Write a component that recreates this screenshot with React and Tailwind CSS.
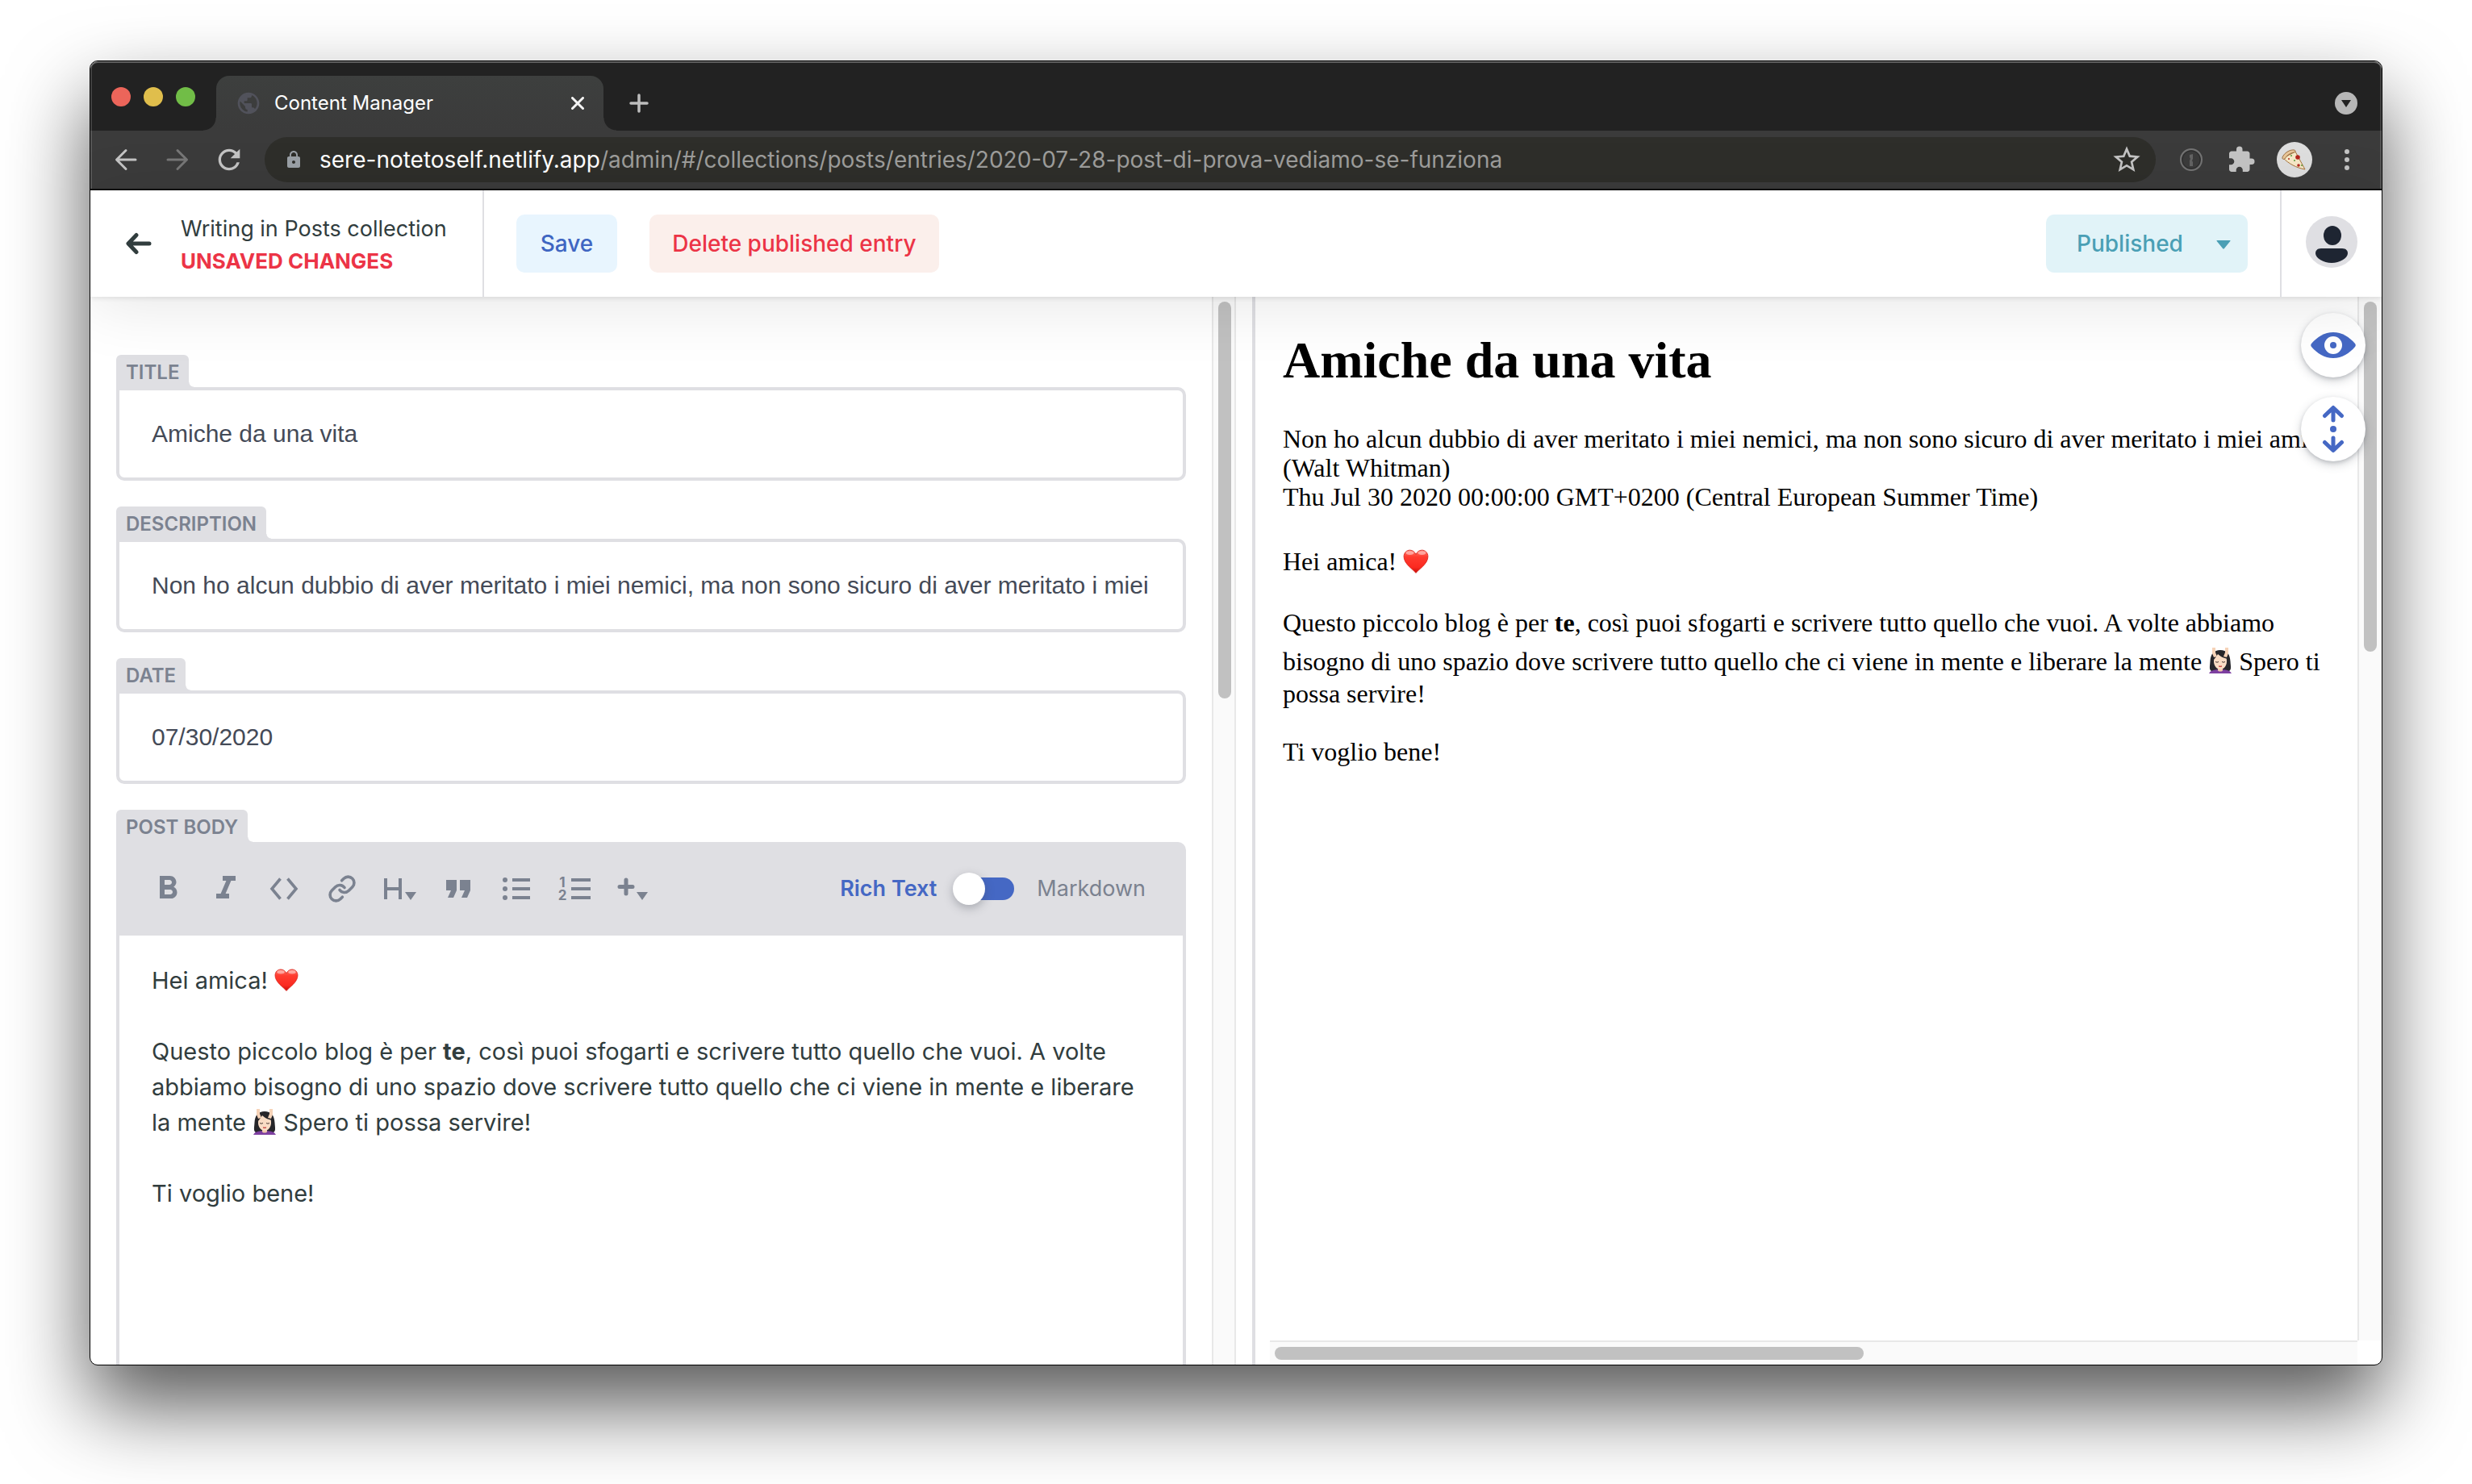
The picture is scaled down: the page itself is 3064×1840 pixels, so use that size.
import React, { useState } from "react";
import {
  MdExtension,
  MdFormatBold,
  MdFormatItalic,
  MdLock,
  MdPublic,
  MdRefresh,
  MdStarBorder,
} from "react-icons/md";
import { Link as LinkIcon } from "lucide-react";

function Heart({ className }) {
  return (
    <svg viewBox="0 0 30 30" role="img" aria-label="❤️" className={className}>
      <defs>
        <linearGradient id="heartFill" x1="0" y1="0" x2="0" y2="1">
          <stop offset="0" stopColor="#ff7466" />
          <stop offset="0.3" stopColor="#ff3b2f" />
          <stop offset="0.75" stopColor="#fb2a20" />
          <stop offset="1" stopColor="#c40d0a" />
        </linearGradient>
      </defs>
      <path
        d="M15 28.500C12 24.500 1 18 1 9.500C1 4.800 4.300 2 8 2C11.200 2 13.800 4 15 7C16.200 4 18.800 2 22 2C25.700 2 29 4.800 29 9.500C29 18 18 24.500 15 28.500Z"
        fill="url(#heartFill)"
        stroke="#d8251c"
        strokeWidth="0.8"
      />
      <ellipse cx="8" cy="5.200" rx="4.600" ry="2.200" fill="#fff" opacity="0.45" />
      <ellipse cx="22" cy="5.200" rx="4.600" ry="2.200" fill="#fff" opacity="0.45" />
    </svg>
  );
}

function Massage({ className }) {
  return (
    <svg viewBox="0 0 30 32" role="img" aria-label="💆🏻‍♀️" className={className}>
      <path d="M15 3C7 3 3 8 2.500 17C2 24 1 27 4 29L26 29C29 27 28 24 27.500 17C27 8 23 3 15 3Z" fill="#26262a" />
      <path d="M1 32C3 28 8 27.500 12 27L18 27C22 27.500 27 28 29 32Z" fill="#7d3fa0" />
      <path d="M12 24h6v4c0 2-6 2-6 0z" fill="#efc9ab" />
      <path d="M15 7C9 7 7 11 7 17C7 23 11 27 15 27C19 27 23 23 23 17C23 11 21 7 15 7Z" fill="#f9dcc4" />
      <path d="M6 16C8 14 10 11 12 8C16 12 21 13 24 14C24 8 20 5 15 5C9 5 6 9 6 16Z" fill="#26262a" />
      <path d="M5 0h4v6l2 5-4 1-2-5zM25 0h-4v6l-2 5 4 1 2-5z" fill="#f6d3b8" />
      <path d="M9 17.500q2 1.500 4 0M17 17.500q2 1.500 4 0" stroke="#4a3a35" strokeWidth="1" fill="none" />
      <path d="M13 23q2 1.500 4 0z" fill="#c8443f" stroke="#c8443f" strokeWidth="0.8" />
    </svg>
  );
}

function Pizza() {
  return (
    <svg viewBox="0 0 44 44" className="size-11" aria-hidden="true">
      <circle cx="22" cy="22" r="22" fill="#dedede" />
      <path d="M8 20L23 12L35 34C24 32 15 27 8 20Z" fill="#f7e9c8" stroke="#a8743c" strokeWidth="1" strokeLinejoin="round" />
      <path d="M7 19C9 14 16 9 22 10C24 11 23 13 21 13C16 14 12 17 10 21C8 22 6.500 21 7 19Z" fill="#e9c79a" stroke="#8a5a2c" strokeWidth="0.8" />
      <circle cx="26" cy="19" r="2.800" fill="#b5271f" />
      <circle cx="27" cy="29" r="1.800" fill="#b5271f" />
      <circle cx="15" cy="21" r="1" fill="#b5271f" />
      <circle cx="18" cy="17" r="1" fill="#5d9a3c" />
      <circle cx="22" cy="23" r="1" fill="#5d9a3c" />
      <circle cx="31" cy="29" r="1" fill="#5d9a3c" />
    </svg>
  );
}

function BrowserChrome() {
  return (
    <div className="relative shrink-0 border-b-2 border-[#121212] bg-[#222222] text-[#c4c4c4]">
      <div className="flex h-[86px] items-end">
        <div className="flex h-[86px] w-[156px] items-center gap-4 pt-0.5 pl-[26px]">
          <button aria-label="Close window" className="size-6 rounded-full bg-[#ec655a]" />
          <button aria-label="Minimize window" className="size-6 rounded-full bg-[#e0be4c]" />
          <button aria-label="Zoom window" className="size-6 rounded-full bg-[#71bd47]" />
        </div>
        <div className="relative flex h-[68px] w-[480px] items-center rounded-t-2xl bg-linear-to-b from-[#3d3f3e] to-[#3b3b3b] pr-5 pl-6">
          <span className="absolute bottom-0 -left-4 size-4 bg-[radial-gradient(circle_at_top_left,transparent_15px,#3b3b3b_16px)]" />
          <span className="absolute -right-4 bottom-0 size-4 bg-[radial-gradient(circle_at_top_right,transparent_15px,#3b3b3b_16px)]" />
          <MdPublic className="size-8 text-[#51525b]" />
          <span className="ml-4 flex-1 text-2xl text-white">Content Manager</span>
          <button aria-label="Close tab" className="p-1">
            <svg viewBox="0 0 16 16" className="size-4" stroke="#f4f4f4" strokeWidth="3" strokeLinecap="round">
              <path d="M1.500 1.500L14.500 14.500M14.500 1.500L1.500 14.500" />
            </svg>
          </button>
        </div>
        <button aria-label="New tab" className="ml-8 flex h-[68px] items-center">
          <svg viewBox="0 0 24 24" className="size-6" stroke="#bdbdbd" strokeWidth="3.500" strokeLinecap="round">
            <path d="M12 2V22M2 12H22" />
          </svg>
        </button>
        <button aria-label="Search tabs" className="mr-[30px] ml-auto flex h-[68px] items-center">
          <svg viewBox="0 0 28 28" className="size-7">
            <circle cx="14" cy="14" r="14" fill="#b7b7b7" />
            <path d="M8 10H20L14 19Z" fill="#222222" />
          </svg>
        </button>
      </div>
      <div className="flex h-[72px] items-center bg-[#3b3b3b]">
        <button aria-label="Back" className="ml-6">
          <svg viewBox="0 0 40 40" className="size-10" fill="none" stroke="#c4c4c4" strokeWidth="3" strokeLinecap="round" strokeLinejoin="round">
            <path d="M32 20H9M20 8.500L8.500 20L20 31.500" />
          </svg>
        </button>
        <button aria-label="Forward" className="ml-6">
          <svg viewBox="0 0 40 40" className="size-10" fill="none" stroke="#777777" strokeWidth="3" strokeLinecap="round" strokeLinejoin="round">
            <path d="M8 20H31M20 8.500L31.500 20L20 31.500" />
          </svg>
        </button>
        <button aria-label="Reload" className="ml-6">
          <MdRefresh className="size-10" />
        </button>
        <div className="ml-6 flex h-14 flex-1 items-center rounded-full bg-[#2e2e2a] pr-4 pl-6">
          <MdLock className="size-6 text-[#9aa0a6]" />
          <div role="textbox" aria-label="Address" className="ml-5 flex-1 text-[28px] whitespace-nowrap text-[#9d9d9b]">
            <span className="text-white">sere-notetoself.netlify.app</span>
            /admin/#/collections/posts/entries/2020-07-28-post-di-prova-vediamo-se-funziona
          </div>
          <button aria-label="Bookmark this page">
            <MdStarBorder className="size-10" />
          </button>
        </div>
        <div className="mr-8 ml-[30px] flex items-center gap-[22px]">
          <button aria-label="1Password" className="mr-1">
            <svg viewBox="0 0 28 28" className="size-7" fill="none" stroke="#747474">
              <circle cx="14" cy="14" r="13" strokeWidth="2" />
              <circle cx="14" cy="14" r="11" stroke="#2c2c2c" />
              <path d="M12 8L16 7V13L15 15L16 17V22H12V15L13 13L12 11Z" fill="#636363" stroke="none" />
            </svg>
          </button>
          <button aria-label="Extensions" className="mx-1">
            <MdExtension className="size-9" />
          </button>
          <button aria-label="Profile">
            <Pizza />
          </button>
          <button aria-label="Browser menu" className="flex w-8 flex-col items-center gap-1 pl-2.5">
            <span className="size-1.5 rounded-full bg-[#c4c4c4]" />
            <span className="size-1.5 rounded-full bg-[#c4c4c4]" />
            <span className="size-1.5 rounded-full bg-[#c4c4c4]" />
          </button>
        </div>
      </div>
      <div className="pointer-events-none absolute inset-0 rounded-t-[9px] shadow-[inset_0_2px_0_rgba(255,255,255,0.28),inset_2px_0_0_rgba(255,255,255,0.14),inset_-2px_0_0_rgba(255,255,255,0.14)]" />
    </div>
  );
}

function EntryHeader() {
  return (
    <header className="relative z-10 flex h-[132px] shrink-0 bg-white text-[28px] shadow-[0_2px_6px_rgba(0,0,0,0.09),0_10px_80px_rgba(0,0,0,0.1)]">
      <a href="#/collections/posts" className="flex items-center border-r-2 border-[#dfdfe3] pr-11 pl-11">
        <svg viewBox="0 0 32 32" className="size-8" fill="none" stroke="#313d3e" strokeWidth="5" strokeLinecap="round" strokeLinejoin="round">
          <path d="M29 16H4M13 5.500L3 16L13 26.500" />
        </svg>
        <span className="ml-9 flex flex-col pt-1 text-[#313d3e]">
          <span className="text-[27px] leading-10">Writing in Posts collection</span>
          <span className="text-[26px] leading-10 font-bold text-[#ec3446]">UNSAVED CHANGES</span>
        </span>
      </a>
      <div className="flex flex-1 items-center gap-10 px-10 font-medium">
        <button className="h-[72px] rounded-[10px] bg-[#e8f5fe] px-[30px] text-[#3f66c2]">Save</button>
        <button className="h-[72px] rounded-[10px] bg-[#fbefeb] px-7 text-[#ec3446]">Delete published entry</button>
        <div className="relative ml-auto">
          <select aria-label="Publish status" className="h-[72px] w-[250px] appearance-none rounded-[10px] bg-[#e1f3f8] pl-[38px] text-[#4a9fb5]">
            <option>Published</option>
          </select>
          <svg viewBox="0 0 18 11" className="pointer-events-none absolute top-8 right-[21px] h-[11px] w-[18px]" fill="#4a9fb5">
            <path d="M1 0H17Q18 0 17.300 1L9.800 10.300Q9 11 8.200 10.300L0.700 1Q0 0 1 0Z" />
          </svg>
        </div>
      </div>
      <div className="flex w-[126px] items-center border-l-2 border-[#dfdfe3] pb-1 pl-[30px]">
        <button aria-label="Account">
          <svg viewBox="0 0 64 64" className="size-16">
            <circle cx="32" cy="32" r="32" fill="#dfdfe3" />
            <ellipse cx="33" cy="24" rx="11" ry="12" fill="#1e2532" />
            <path d="M19 40H45C50 40 52 43 52 46C52 52 42 58 32 58C22 58 12 52 12 46C12 43 14 40 19 40Z" fill="#1e2532" />
          </svg>
        </button>
      </div>
    </header>
  );
}

function FieldLabel({ id, htmlFor, children }) {
  return (
    <label id={id} htmlFor={htmlFor} className="relative inline-block h-10 self-start rounded-t-md bg-[#dfdfe3] px-3 text-2xl leading-[44px] font-semibold text-[#7b8290]">
      {children}
      <span className="absolute -right-1.5 bottom-0 size-1.5 bg-[radial-gradient(circle_at_top_right,transparent_5px,#dfdfe3_6px)]" />
    </label>
  );
}

function TextField({ id, label, value }) {
  return (
    <div className="flex flex-col">
      <FieldLabel htmlFor={id}>{label}</FieldLabel>
      <input
        id={id}
        type="text"
        defaultValue={value}
        className="h-[116px] w-full rounded-[10px] rounded-tl-none border-4 border-[#dfdfe3] bg-white px-10 font-['Liberation_Sans',sans-serif] text-[30px] text-[#444a57] outline-none"
      />
    </div>
  );
}

function Caret() {
  return (
    <svg viewBox="0 0 14 10" className="h-2.5 w-3.5" fill="currentColor">
      <path d="M0 0H14L7 10Z" />
    </svg>
  );
}

function EditorToolbar() {
  const [markdown, setMarkdown] = useState(false);
  const button = "flex size-12 items-center justify-center";
  return (
    <div className="flex h-[116px] items-center rounded-tr-[10px] bg-[#dfdfe3] px-10 text-[27px] text-[#7b8290]">
      <div className="flex items-center gap-6">
        <button aria-label="Bold" className={button}>
          <MdFormatBold className="size-12" />
        </button>
        <button aria-label="Italic" className={button}>
          <MdFormatItalic className="size-12" />
        </button>
        <button aria-label="Code" className={button}>
          <svg viewBox="0 0 36 28" className="h-7 w-9" fill="none" stroke="currentColor" strokeWidth="3.600">
            <path d="M13.500 1.500L3 14L13.500 26.500M22.500 1.500L33 14L22.500 26.500" />
          </svg>
        </button>
        <button aria-label="Link" className={button}>
          <LinkIcon className="size-9" strokeWidth={2.4} />
        </button>
        <button aria-label="Headings" className="flex size-12 items-end justify-center pb-2.5">
          <svg viewBox="0 0 22 28" className="mr-1 h-7 w-[22px]" fill="none" stroke="currentColor" strokeWidth="4">
            <path d="M2 1V27M20 1V27M2 14H20" />
          </svg>
          <Caret />
        </button>
        <button aria-label="Quote" className={button}>
          <svg viewBox="0 0 32 24" className="h-6 w-8" fill="currentColor">
            <path d="M1 1H14V14L10 23H3L7 14H1ZM18 1H31V14L27 23H20L24 14H18Z" />
          </svg>
        </button>
        <button aria-label="Bulleted list" className={button}>
          <svg viewBox="0 0 34 28" className="h-7 w-[34px]" fill="currentColor">
            <circle cx="3" cy="3" r="3" />
            <circle cx="3" cy="14" r="3" />
            <circle cx="3" cy="25" r="3" />
            <path d="M12 1H34V5H12ZM12 12H34V16H12ZM12 23H34V27H12Z" />
          </svg>
        </button>
        <button aria-label="Numbered list" className={button}>
          <span className="mr-1.5 flex flex-col text-[17px] leading-4 font-bold" aria-hidden="true">
            <span>1</span>
            <span>2</span>
          </span>
          <svg viewBox="0 0 24 28" className="h-7 w-6" fill="currentColor">
            <path d="M0 1H24V5H0ZM0 12H24V16H0ZM0 23H24V27H0Z" />
          </svg>
        </button>
        <button aria-label="Add component" className="flex size-12 items-end justify-center pb-2.5">
          <svg viewBox="0 0 22 28" className="mr-0.5 h-7 w-[22px]" stroke="currentColor" strokeWidth="5" strokeLinecap="round">
            <path d="M11 3V20M3 11.500H19" />
          </svg>
          <Caret />
        </button>
      </div>
      <label className="mr-2.5 ml-auto flex items-center">
        <span className="font-semibold text-[#4568c4]">Rich Text</span>
        <input
          type="checkbox"
          role="switch"
          aria-label="Markdown"
          className="sr-only"
          checked={markdown}
          onChange={(event) => setMarkdown(event.target.checked)}
        />
        <span className={markdown ? "mx-7 flex h-7 w-[68px] items-center justify-end rounded-full bg-[#4568c4]" : "mx-7 flex h-7 w-[68px] items-center rounded-full bg-[#4568c4]"}>
          <span className="-ml-2 size-10 rounded-full bg-white shadow-[0_4px_12px_rgba(68,74,87,0.35)]" />
        </span>
        <span>Markdown</span>
      </label>
    </div>
  );
}

function EditorPane() {
  return (
    <section className="flex w-[calc(50%+24px)] shrink-0 border-r-4 border-[#dfdfe3] pr-5">
      <form className="flex min-w-0 flex-1 flex-col gap-8 overflow-hidden px-8 pt-[72px]">
        <TextField id="title" label="TITLE" value="Amiche da una vita" />
        <TextField
          id="description"
          label="DESCRIPTION"
          value="Non ho alcun dubbio di aver meritato i miei nemici, ma non sono sicuro di aver meritato i miei amici. (Walt Whitman)"
        />
        <TextField id="date" label="DATE" value="07/30/2020" />
        <div className="flex min-h-0 flex-1 flex-col">
          <FieldLabel id="body-label">POST BODY</FieldLabel>
          <EditorToolbar />
          <div
            role="textbox"
            aria-multiline="true"
            aria-labelledby="body-label"
            className="flex flex-1 flex-col gap-11 border-x-4 border-[#dfdfe3] px-10 pt-[34px] text-[29px] leading-[44px] whitespace-nowrap text-[#313d3e]"
          >
            <p>
              Hei amica! <Heart className="inline size-[30px] align-[-4px]" />
            </p>
            <p>
              Questo piccolo blog è per <strong>te</strong>, così puoi sfogarti e scrivere tutto quello che vuoi. A volte
              <br />
              abbiamo bisogno di uno spazio dove scrivere tutto quello che ci viene in mente e liberare
              <br />
              la mente <Massage className="inline h-8 w-[30px] align-[-5px]" /> Spero ti possa servire!
            </p>
            <p>Ti voglio bene!</p>
          </div>
        </div>
      </form>
      <div className="w-[30px] border-x-2 border-[#e8e8e8] bg-[#fafafa] px-1.5 pt-1.5">
        <div className="h-[492px] w-4 rounded-full bg-[#c1c1c1]" />
      </div>
    </section>
  );
}

function PreviewPane() {
  return (
    <section className="relative flex min-w-0 flex-1">
      <div className="flex min-w-0 flex-1 flex-col">
        <article className="min-h-0 flex-1 overflow-hidden pt-10 pl-[34px] font-['Liberation_Serif',serif] text-[32px] leading-9 whitespace-nowrap text-black">
          <h1 className="mb-10 text-[64px] leading-[78px] font-bold">Amiche da una vita</h1>
          <p>
            Non ho alcun dubbio di aver meritato i miei nemici, ma non sono sicuro di aver meritato i miei amici.
            <br />
            (Walt Whitman)
          </p>
          <p>Thu Jul 30 2020 00:00:00 GMT+0200 (Central European Summer Time)</p>
          <p className="mt-11">
            Hei amica! <Heart className="inline size-8 align-[-5px]" />
          </p>
          <p className="mt-10">
            Questo piccolo blog è per <strong>te</strong>, così puoi sfogarti e scrivere tutto quello che vuoi. A volte abbiamo
          </p>
          <p className="mt-3">
            bisogno di uno spazio dove scrivere tutto quello che ci viene in mente e liberare la mente{" "}
            <Massage className="inline h-8 w-[30px] align-[-4px]" /> Spero ti
          </p>
          <p className="mt-1">possa servire!</p>
          <p className="mt-9">Ti voglio bene!</p>
        </article>
        <div className="ml-[18px] h-[30px] shrink-0 border-t-2 border-[#e8e8e8] bg-[#fafafa] px-1.5 pt-1.5">
          <div className="h-4 w-[730px] rounded-full bg-[#c1c1c1]" />
        </div>
      </div>
      <div className="mb-[30px] w-[30px] border-l-2 border-[#e8e8e8] bg-[#fafafa] px-1.5 pt-1.5">
        <div className="h-[434px] w-4 rounded-full bg-[#c1c1c1]" />
      </div>
      <div className="absolute top-5 right-5 flex flex-col gap-6">
        <button aria-label="Toggle preview" className="flex size-20 items-center justify-center rounded-full bg-white shadow-[0_4px_12px_rgba(68,74,87,0.25),0_2px_4px_rgba(68,74,87,0.2)]">
          <svg viewBox="0 0 56 32" className="h-8 w-14">
            <path d="M1 14C8 6 17 0 28 0C39 0 48 6 55 14Q56.500 16 55 18C48 26 39 32 28 32C17 32 8 26 1 18Q-0.500 16 1 14Z" fill="#4568c4" />
            <circle cx="28" cy="16" r="11" fill="#fff" />
            <circle cx="28" cy="16" r="4" fill="#4568c4" />
          </svg>
        </button>
        <button aria-label="Sync scrolling" className="flex size-20 items-center justify-center rounded-full bg-white shadow-[0_4px_12px_rgba(68,74,87,0.25),0_2px_4px_rgba(68,74,87,0.2)]">
          <svg viewBox="0 0 28 60" className="h-[60px] w-7" fill="none" stroke="#4568c4" strokeWidth="5" strokeLinecap="round" strokeLinejoin="round">
            <path d="M3.500 13.500L14 3.500L24.500 13.500M14 4V19M3.500 46.500L14 56.500L24.500 46.500M14 56V41" />
            <circle cx="14" cy="30" r="4" fill="#4568c4" stroke="none" />
          </svg>
        </button>
      </div>
    </section>
  );
}

export default function App() {
  return (
    <div className="h-screen bg-white px-[111px] pt-[75px] pb-[147px] font-['Inter',sans-serif]">
      <div className="flex h-full flex-col overflow-hidden rounded-[10px] border border-black bg-white shadow-[0_50px_100px_rgba(0,0,0,0.66)]">
        <BrowserChrome />
        <EntryHeader />
        <main className="flex min-h-0 flex-1">
          <EditorPane />
          <PreviewPane />
        </main>
      </div>
    </div>
  );
}
